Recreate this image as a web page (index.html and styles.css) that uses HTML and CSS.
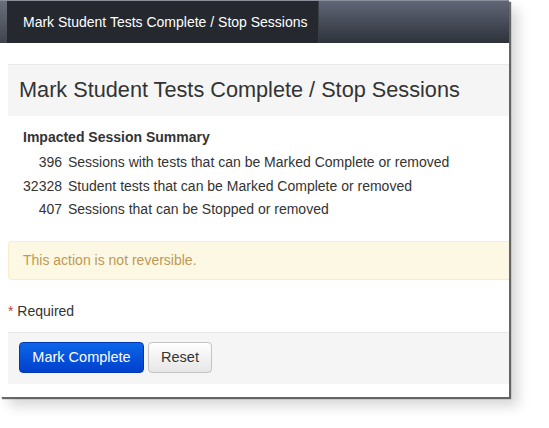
FILE: index.html
```html
<!DOCTYPE html>
<html>
<head>
<meta charset="utf-8">
<link rel="stylesheet" href="styles.css">
</head>
<body>
<div class="window">
  <div class="topbar">
    <div class="strip"></div>
    <div class="tab">Mark Student Tests Complete / Stop Sessions</div>
  </div>
  <div class="content">
    <div class="panel-heading">Mark Student Tests Complete / Stop Sessions</div>
    <div class="summary">
      <div class="summary-title">Impacted Session Summary</div>
      <div class="row"><span class="num">396</span><span class="desc">Sessions with tests that can be Marked Complete or removed</span></div>
      <div class="row"><span class="num">32328</span><span class="desc">Student tests that can be Marked Complete or removed</span></div>
      <div class="row"><span class="num">407</span><span class="desc">Sessions that can be Stopped or removed</span></div>
    </div>
    <div class="alert">This action is not reversible.</div>
    <div class="required"><span class="star">*</span> Required</div>
    <div class="footer">
      <button class="btn btn-primary">Mark Complete</button>
      <button class="btn btn-default">Reset</button>
    </div>
  </div>
</div>
</body>
</html>
```

FILE: styles.css
```css
html, body {
  margin: 0;
  padding: 0;
  background: #ffffff;
}
body {
  font-family: "Liberation Sans", Arial, sans-serif;
  color: #333333;
  width: 549px;
  height: 428px;
  overflow: hidden;
}
.window {
  width: 509px;
  height: 397px;
  background: #ffffff;
  overflow: hidden;
  box-shadow: 2px 2px 1px rgba(60, 60, 60, 0.75), 9px 9px 12px rgba(0, 0, 0, 0.16);
}
.topbar {
  height: 43px;
  display: flex;
  background: linear-gradient(#606676, #2d323a);
  border-top: 1px solid #8a8f99;
  box-sizing: border-box;
}
.strip {
  width: 7px;
  background: linear-gradient(#6a707c, #3e434c);
}
.tab {
  width: 312px;
  background: #25292f;
  color: #ffffff;
  font-size: 14px;
  line-height: 42px;
  padding-left: 16px;
  box-sizing: border-box;
  border-right: 1px solid #3b3f47;
  white-space: nowrap;
}
.content {
  padding-top: 21px;
  padding-left: 8px;
}
.panel-heading {
  height: 52px;
  box-sizing: border-box;
  background: #f5f5f5;
  border-top: 1px solid #e9e9e9;
  font-size: 21.7px;
  line-height: 50px;
  padding-left: 11px;
  color: #333;
  white-space: nowrap;
}
.summary {
  padding: 11px 0 0 15px;
  font-size: 14px;
}
.summary-title {
  font-weight: bold;
  line-height: 20px;
  margin-bottom: 4px;
}
.row {
  display: flex;
  line-height: 23.5px;
}
.num {
  width: 39px;
  text-align: right;
  margin-right: 6px;
}
.alert {
  margin-top: 19px;
  height: 39px;
  box-sizing: border-box;
  background: #fcf8e3;
  border: 1px solid #faebcc;
  border-right: none;
  border-radius: 4px 0 0 4px;
  color: #c09853;
  font-size: 14px;
  line-height: 37px;
  padding-left: 14px;
}
.required {
  font-size: 14px;
  line-height: 20px;
  margin-top: 21px;
  margin-bottom: 11px;
}
.star {
  color: #b94a48;
}
.footer {
  height: 52px;
  box-sizing: border-box;
  background: #f5f5f5;
  border-top: 1px solid #e5e5e5;
  padding: 9px 0 0 11px;
  display: flex;
  gap: 4px;
}
.btn {
  font-family: "Liberation Sans", Arial, sans-serif;
  font-size: 14.5px;
  height: 31px;
  padding: 0 10px;
  border-radius: 4px;
  margin: 0;
  cursor: pointer;
  white-space: nowrap;
}
.btn-primary {
  color: #ffffff;
  background: linear-gradient(#0c66ea, #0040cc);
  border: 1px solid #0038b4;
  width: 125px;
}
.btn-default {
  color: #333333;
  background: linear-gradient(#ffffff, #e6e6e6);
  border: 1px solid #c4c4c4;
  width: 64px;
}
```
